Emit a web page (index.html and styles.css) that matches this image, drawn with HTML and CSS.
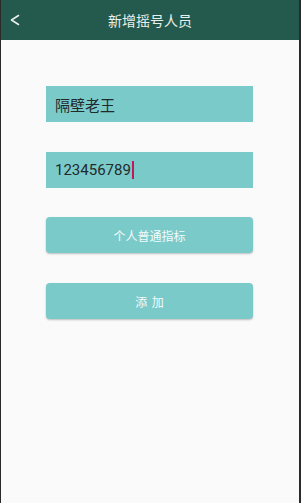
FILE: index.html
```html
<!DOCTYPE html>
<html>
<head>
<meta charset="utf-8">
<link rel="stylesheet" href="styles.css">
</head>
<body>
<div class="frame">
  <header class="bar">
    <svg class="back" width="12" height="12" viewBox="0 0 12 12"><path d="M9.5 1.5 L2.5 6 L9.5 10.5" fill="none" stroke="#e8f0ee" stroke-width="1.5" stroke-linecap="round" stroke-linejoin="round"/></svg>
    <span class="title">新增摇号人员</span>
  </header>
  <main class="form">
    <div class="field">隔壁老王</div>
    <div class="field">123456789<span class="caret"></span></div>
    <div class="btn">个人普通指标</div>
    <div class="btn spaced">添 加</div>
  </main>
</div>
</body>
</html>
```
FILE: styles.css
```css
html, body {
  margin: 0;
  padding: 0;
  width: 301px;
  height: 503px;
  overflow: hidden;
}
body {
  font-family: "Noto Sans CJK SC", "Roboto", sans-serif;
  background: #2a2a2a;
}
.frame {
  margin: 0 2px 0 1px;
  height: 503px;
  background: #fafafa;
}
.bar {
  height: 40px;
  background: #245a4d;
  position: relative;
  display: flex;
  align-items: center;
  justify-content: center;
  color: #e8f0ee;
}
.back {
  position: absolute;
  left: 8px;
  top: 14px;
}
.title {
  font-size: 14px;
}
.form {
  display: flex;
  flex-direction: column;
  padding: 46px 46px 0 45px;
}
.field {
  height: 36px;
  background: #7bcaca;
  display: flex;
  align-items: center;
  padding-left: 9px;
  font-family: "Roboto", "Noto Sans CJK SC", sans-serif;
  font-size: 15px;
  color: #222b2b;
  margin-bottom: 30px;
}
.field + .field { margin-bottom: 29px; }
.caret {
  display: inline-block;
  width: 2px;
  height: 18px;
  background: #c2185b;
  margin-left: 1px;
}
.btn {
  height: 36px;
  background: #7bcaca;
  border-radius: 4px;
  box-shadow: 0 1px 2px rgba(0,0,0,0.25);
  color: #f4fbfb;
  font-size: 12px;
  display: flex;
  align-items: center;
  justify-content: center;
  margin-bottom: 30px;
}
.spaced {
  word-spacing: 2px;
}
```
